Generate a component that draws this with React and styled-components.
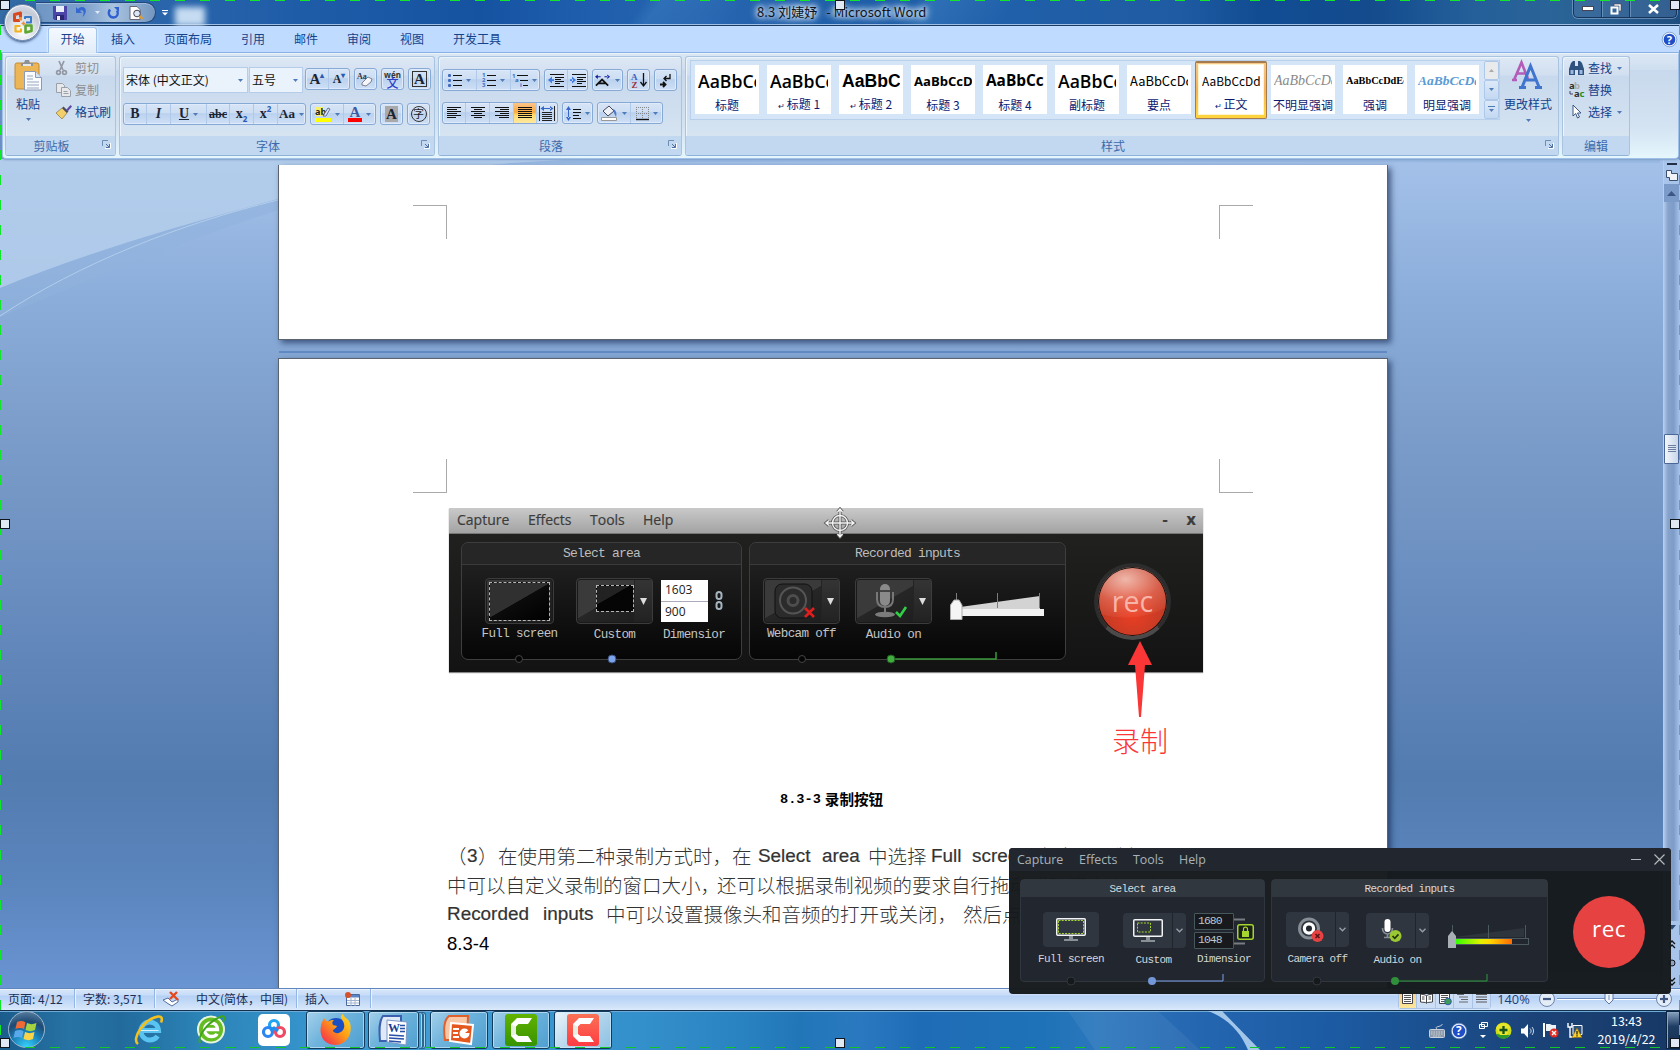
import React from "react";
import styled, { createGlobalStyle, css } from "styled-components";

const Global = createGlobalStyle`
  * { box-sizing: border-box; }
  html, body { margin: 0; padding: 0; overflow: hidden; }
  body { font-family: "Noto Sans CJK SC", "Noto Sans", sans-serif; font-size: 12px; color: #15428b; }
  svg { display: block; flex: none; overflow: visible; }
`;

const SERIF = `"Liberation Serif", "Noto Sans CJK SC", serif`;
const HUMAN = `"Open Sans", "Noto Sans", "Noto Sans CJK SC", sans-serif`;
const MONO = `"Liberation Mono", monospace`;

/* ---------- screen ---------- */
const Screen = styled.div`
  position: relative; width: 1680px; height: 1050px; overflow: hidden;
  display: flex; flex-direction: column; background: #6b8fc2;
`;

/* ---------- title bar ---------- */
const TitleBar = styled.header`
  height: 26px; flex: none; display: flex; position: relative;
  border-bottom: 1px solid #1b3a62; box-shadow: inset 0 -1px 0 #9fc0e6;
  background:
    linear-gradient(125deg, transparent 38%, rgba(80,150,210,.25) 39%, transparent 44%, transparent 54%, rgba(90,160,220,.25) 55%, transparent 60%),
    linear-gradient(90deg, #336ba5 0, #2b66ab 150px, #1f5ca8 300px, #1553a1 480px, #1d5cab 560px, #2765b0 700px, #1e5da8 860px, #2060aa 1000px, #1f5ba2 1180px, #114c93 1260px, #134b8d 1370px, #245f9a 1470px, #2a6497 1560px, #1f4d7f 1680px);
`;
const QuickAccess = styled.div`
  margin: 2px 0 0 36px; width: 120px; height: 21px; padding-left: 16px;
  border: 1px solid #25487a; border-left: 0; border-radius: 0 11px 11px 0;
  background: linear-gradient(90deg, #6f96c4, #7ea0cc 40%, #a9c3df 65%, #7396bf);
  box-shadow: inset 0 1px 0 #9dbce0; display: flex; align-items: center;
`;
const QuickSlot = styled.span`width: ${(p) => p.$w}px; display: flex; justify-content: center;`;
const QuickMore = styled.span`width: 20px; padding: 10px 0 0 6px;`;
const Ghost = styled.span`width: 30px; height: 19px; margin: 7px 0 0 -1px; background: #cfe3f6; filter: blur(3px); opacity: .95;`;
const TitleText = styled.div`
  margin-left: 552px; height: 24px; font: 13px/24px "Noto Sans CJK SC", sans-serif; letter-spacing: .06px; color: #0c1524; white-space: pre;
  text-shadow: 0 0 4px #dbe8f6, 0 0 6px #dbe8f6, 0 0 8px #c6daf0, 0 0 10px #cfe0f3;
`;
const WindowControls = styled.div`
  margin-left: auto; margin-right: 3px; width: 104px; height: 18px; display: flex; border: 1px solid #17355c; border-top: 0;
  border-radius: 0 0 5px 5px; box-shadow: 0 0 0 1px rgba(170,200,230,.45); background: rgba(90,130,175,.35);
`;
const WinBtn = styled.span`
  width: ${(p) => p.$w}px; display: flex; align-items: center; justify-content: center;
  & + & { border-left: 1px solid #1b3a62; box-shadow: inset 1px 0 0 rgba(170,200,230,.4); }
`;
const OfficeButton = styled.div`
  position: absolute; left: 4px; top: 4px; width: 37px; height: 37px; border-radius: 50%; z-index: 3;
  display: flex; align-items: center; justify-content: center; border: 1px solid #6b87ad;
  background: radial-gradient(circle at 50% 75%, #ffffff 0, #e6e8ee 30%, #c3cad7 60%, #e3e8f0 100%);
  box-shadow: inset 0 0 0 1px #f3f6fa, 0 1px 3px #24406a;
`;

/* ---------- tabs ---------- */
const TabStrip = styled.nav`
  height: 27px; flex: none; display: flex; align-items: flex-end; padding-left: 46px; background: #bfdbff;
  border-bottom: 1px solid #8db2e3; position: relative;
`;
const Tab = styled.span`
  height: 26px; padding: 0 14.5px; font-size: 12px; line-height: 25px; color: #15428b; white-space: nowrap;
  ${(p) => p.$active && css`
    margin: 0 -.5px -1px 2px; padding: 0 11.5px; height: 26px; line-height: 22px; border: 1px solid #a3c4ec; border-bottom: 0; border-radius: 3px 3px 0 0;
    background: linear-gradient(#f4f9ff, #e2ecf8); box-shadow: 0 0 3px #fff;
  `}
`;
const HelpMark = styled.span`margin: 0 3px 5px auto;`;

/* ---------- ribbon ---------- */
const Ribbon = styled.section`
  height: 106px; flex: none; margin: 0 1px 0 2px; padding: 2px 0 0 2px; display: flex; gap: 3px; position: relative; z-index: 1;
  border: 1px solid #9fc0e8; border-top-color: #eaf4fc; border-radius: 0 0 4px 4px; box-shadow: 0 1px 2px #7f9fc8;
  background: linear-gradient(#dbe6f4 0, #cfdff0 15%, #c9d9ed 16%, #d3e3f2 70%, #e5f6fd 100%);
`;
const Group = styled.div`
  width: ${(p) => p.$w}px; height: 100px; border: 1px solid #a9c4e0; border-bottom-color: #8fb2d8; border-radius: 3px; display: flex; flex-direction: column; flex: none;
  box-shadow: inset 1px 1px 0 #edf5fc; background: linear-gradient(#dde8f5 0, #d2dff0 18%, #c8d9ed 20%, #dae7f3 100%);
`;
const GroupBody = styled.div`flex: 1; display: flex; flex-direction: ${(p) => (p.$col ? "column" : "row")}; padding: ${(p) => p.$p || "0"};`;
const GroupLabel = styled.div`
  height: 19px; display: flex; align-items: center; justify-content: center; background: #c1d8f0; color: #3e6aaa; font-size: 12px; line-height: 19px; border-radius: 0 0 3px 3px; position: relative;
  padding-right: ${(p) => (p.$launcher ? 18 : 0)}px;
`;
const Launcher = styled.span`position: absolute; right: 4px; top: 4px;`;

const PasteButton = styled.div`width: 46px; display: flex; flex-direction: column; align-items: center; padding: 3px 2px 0 0;`;
const ButtonCaption = styled.span`font-size: 12px; line-height: 16px; color: #15428b; margin: ${(p) => p.$m || "0"}; white-space: nowrap;`;
const CommandList = styled.div`display: flex; flex-direction: column; margin-left: ${(p) => p.$ml || 0}px;`;
const Command = styled.div`
  height: 22px; display: flex; align-items: center; font-size: 12px; line-height: 22px; color: ${(p) => (p.$off ? "#8d8d8d" : "#15428b")}; white-space: nowrap;
`;
const CommandIcon = styled.span`width: 19px; display: flex; justify-content: flex-start;`;
const CommandDrop = styled.span`margin-left: 5px;`;

const ToolRow = styled.div`display: flex; gap: 4px; align-items: flex-start; height: ${(p) => p.$h}px;`;
const Combo = styled.div`
  width: ${(p) => p.$w}px; height: 26px; margin: -1px -3px 0 0; border: 1px solid #b5cde9; background: #eaf2fb; color: #111; font-size: 12px; line-height: 22px;
  padding: 0 4px 0 2px; display: flex; justify-content: space-between; align-items: center; white-space: nowrap;
`;
const ComboGap = styled.i`width: 0; margin-right: -3px;`;
const ButtonSet = styled.div`
  height: 22px; display: flex; border: 1px solid #86a9d6; border-radius: 3px; box-shadow: inset 0 0 0 1px #dfeafa;
  background: linear-gradient(#d7e4f6 0, #cddef3 45%, #bad1ee 48%, #cfe0f6 100%);
`;
const Tool = styled.span`
  width: ${(p) => p.$w}px; display: flex; align-items: center; justify-content: center; gap: 4px; color: #16243a; font: ${(p) => p.$font || "12px"} ; white-space: nowrap;
  & + & { border-left: 1px solid #b0c9e8; }
  ${(p) => p.$on && css`background: linear-gradient(#fbc58b, #fba93e 45%, #ffd96b 60%, #ffe9a0);`}
`;
const Glyph = styled.span`
  font-family: ${SERIF}; font-weight: 700; font-size: ${(p) => p.$s || 15}px; line-height: 16px; color: ${(p) => p.$c || "#1b2433"};
  font-style: ${(p) => (p.$i ? "italic" : "normal")}; text-decoration: ${(p) => p.$d || "none"};
  ${(p) => p.$bar && css`border-bottom: 4px solid ${p.$bar}; line-height: 12px; padding: 0 2px;`}
  ${(p) => p.$box && css`border: 1px solid #333; padding: 0 1px; line-height: 14px;`}
  ${(p) => p.$fill && css`background: #a9a9a9; padding: 0 1px;`}
  sub, sup { font-size: 8px; line-height: 0; color: #2a5ab4; font-family: "Noto Sans", sans-serif; }
`;
const Pinyin = styled.span`
  display: flex; flex-direction: column; align-items: center; color: #2d3ec9; font-size: 12px; line-height: 10px; font-weight: 500;
  small { font: 700 8px/7px "Noto Sans", sans-serif; color: #333; }
`;
const Ringed = styled.span`width: 16px; height: 16px; border: 1px solid #333; border-radius: 50%; font-size: 11px; line-height: 13px; text-align: center; color: #222;`;

/* ---------- styles gallery ---------- */
const Gallery = styled.div`display: flex; height: 60px; width: 810px; border: 1px solid #b9d0ed; background: #d4e5f8; flex: none;`;
const StyleCell = styled.div`
  width: 72px; height: 58px; padding: 4px; flex: none;
  ${(p) => p.$on && css`border: 1px solid #a37b4c; border-top-width: 2px; padding: 2px 3px; border-radius: 2px; background: linear-gradient(#f6c58a, #f5b35a 50%, #ffd23f 90%);`}
`;
const StyleCard = styled.div`
  width: 64px; height: 49px; background: #fff; display: flex; flex-direction: column; overflow: hidden;
  ${(p) => p.$on && css`box-shadow: 0 0 0 1px #fff4cc;`}
`;
const Sample = styled.span`
  width: 58px; height: 32px; margin-left: 3px; overflow: hidden; white-space: nowrap; font-family: ${(p) => p.$f}; font-size: ${(p) => p.$s}px; font-weight: ${(p) => p.$b || 400};
  font-style: ${(p) => (p.$i ? "italic" : "normal")}; color: ${(p) => p.$c || "#000"}; line-height: 32px;
`;
const StyleName = styled.span`font-size: 12px; line-height: 16px; color: #0c1a70; text-align: center; white-space: nowrap;
  small { font-size: 8px; }
`;
const GalleryScroll = styled.div`width: 15px; margin-left: 1px; display: flex; flex-direction: column;`;
const ScrollCell = styled.span`
  flex: 1; display: flex; align-items: center; justify-content: center; border: 1px solid #aec8ea; border-radius: 2px;
  background: ${(p) => (p.$off ? "#e9eaec" : "linear-gradient(#dde9f8,#c3d8f2)")};
`;
const ChangeStyles = styled.div`width: 56px; display: flex; flex-direction: column; align-items: center; padding-top: 1px;`;

/* ---------- document ---------- */
const Workspace = styled.main`
  flex: 1; position: relative; overflow: hidden; display: flex; flex-direction: column; padding: 6px 0 0 278px;
  background: linear-gradient(#a4c1e9 0, #8badda 141px, #7c9dca 271px, #6c90c1 406px, #6085b9 506px, #537cb0 616px, #5a85bd 726px, #6a95d3 830px);
`;
const Swoosh = styled.svg`position: absolute; left: 0; top: 0; pointer-events: none;`;
const Page = styled.article`
  position: relative; width: 1110px; flex: none; background: #fff; border: 1px solid #5b636e; box-shadow: 3px 3px 6px rgba(20,40,80,.65);
  height: ${(p) => p.$h}px; ${(p) => p.$cut && css`border-top: 0;`}
  padding: ${(p) => p.$p}; 
`;
const PageSeam = styled.div`width: 1108px; height: 2px; margin: 11px 0 5px 1px; background: #6189c4; flex: none; position: relative;`;
const CropRow = styled.div`width: 840px; height: 34px; display: flex; justify-content: space-between; margin-left: 134px;`;
const Crop = styled.i`
  width: 34px; height: 34px; border: 0 solid #aaa;
  ${(p) => (p.$v === "t" ? "border-top-width: 1px;" : "border-bottom-width: 1px;")}
  ${(p) => (p.$h === "r" ? "border-right-width: 1px;" : "border-left-width: 1px;")}
`;
const Caption = styled.p`
  margin: 28px 0 0 501px; display: flex; gap: 4px; height: 22px; font: 700 14.6px/22px "Noto Sans CJK SC", sans-serif; color: #000;
  span { font-family: ${MONO}; font-size: 13.6px; padding-top: 1px; }
`;
const Paragraph = styled.div`margin: 31px 0 0 168px; font-family: "Liberation Sans", "Noto Sans CJK SC", sans-serif; font-size: 19.5px; color: #333;`;
const Line = styled.p`margin: 0; height: 29px; line-height: 29px; display: flex; white-space: nowrap; font-weight: 300;`;
const Run = styled.span`
  width: ${(p) => p.$w}px; flex: none;
  ${(p) => (p.$latin ? css`font-size: 18.9px; font-weight: 400; -webkit-text-stroke: .2px #333;` : css`font-family: "Noto Sans CJK SC", sans-serif;`)}
  ${(p) => p.$dark && css`color: #000; padding-top: 1px; font-size: 18.5px; -webkit-text-stroke: 0;`}
`;
const NoteRow = styled.div`display: flex; flex-direction: column; align-items: center; width: 60px; margin-left: 831px; margin-top: -31px; height: 119px; position: relative; z-index: 1;`;
const Note = styled.span`font-size: 28px; line-height: 34px; color: #fb3636; font-weight: 300; margin-top: 5px; white-space: nowrap;`;

/* ---------- legacy recorder picture ---------- */
const Classic = styled.div`width: 754px; height: 164px; margin: 15px 0 0 170px; background: linear-gradient(#232321, #131313); display: flex; flex-direction: column; box-shadow: 0 1px 1px #888;`;
const ClassicMenu = styled.div`
  height: 26px; flex: none; display: flex; align-items: center; padding: 0 4px 3px 8px; background: linear-gradient(#c9c9c9, #a3a3a3); border-bottom: 1px solid #777; color: #3c3c3c;
  font: 14px/21px ${HUMAN}; -webkit-text-stroke: .2px #3c3c3c;
`;
const MenuWord = styled.span`width: ${(p) => p.$w}px;`;
const MenuSpring = styled.span`flex: 1;`;
const ClassicClose = styled.b`width: ${(p) => p.$w}px; font: 700 16px/21px ${HUMAN}; text-align: center;`;
const ClassicBody = styled.div`flex: 1; display: flex; padding: 8px 0 0 12px; gap: 7px;`;
const ClassicPanel = styled.div`
  width: ${(p) => p.$w}px; height: 118px; border: 1px solid #3e3e3e; border-radius: 7px; background: linear-gradient(#252525, #060606); display: flex; flex-direction: column; position: relative; flex: none;
`;
const ClassicHead = styled.div`height: 22px; flex: none; border-bottom: 1px solid #3a3a3a; background: #262626; border-radius: 7px 7px 0 0; color: #bdbdbd; text-align: center; font: 13px/21px ${MONO}; letter-spacing: -.8px;`;
const PanelRow = styled.div`flex: 1; display: flex; padding-top: ${(p) => p.$pt}px;`;
const Column = styled.div`width: ${(p) => p.$w}px; display: flex; flex-direction: column; align-items: center; margin-left: ${(p) => p.$ml || 0}px; margin-top: ${(p) => p.$mt || 0}px; flex: none;`;
const ClassicTile = styled.div`
  width: ${(p) => p.$w}px; height: 46px; flex: none; border: 1px solid #3c3c3c; border-radius: 4px; background: linear-gradient(150deg, #3a3a3a 45%, #262626 46%, #1c1c1c); display: flex; align-items: center; justify-content: center;
  box-shadow: inset 0 0 0 1px #1a1a1a;
`;
const FullArea = styled.span`width: 61px; height: 39px; border: 1.5px dashed #b5b5b5; background: linear-gradient(150deg, #303030 48%, #0b0b0b 49%, #000);`;
const CustomArea = styled.span`width: 38px; height: 27px; border: 1.5px dashed #b5b5b5; margin: -6px 0 0 19px; background: linear-gradient(150deg, #222 40%, #050505 41%);`;
const IconNudge = styled.span`margin-left: ${(p) => p.$x}px;`;
const ClassicSplit = styled.span`width: 18px; margin-left: auto; height: 42px; border-left: 1px solid #242424; background: linear-gradient(#343434, #222); display: flex; align-items: center; justify-content: center;`;
const ClassicLabel = styled.span`font: 12.6px/14px ${MONO}; letter-spacing: -.65px; color: #c4c4c4; margin: ${(p) => p.$mt || 3}px 0 0 ${(p) => p.$x || 0}px; white-space: nowrap;`;
const ClassicFields = styled.div`width: 47px; height: 42px; background: #fff; margin-top: 2px; display: flex; flex-direction: column;`;
const ClassicField = styled.span`flex: 1; color: #222; font: 12px/20px ${HUMAN}; padding-left: 4px; & + & { border-top: 1px solid #aab; }`;
const FieldsRow = styled.div`display: flex; gap: 7px; align-items: center;`;
const Rail = styled.svg`position: absolute; left: -1px; bottom: -7px;`;
const ClassicRec = styled.div`
  width: 77px; height: 77px; margin: 21px 0 0 21px; border-radius: 50%; border: 4px solid #2d2d2d; border-bottom-color: #4a4a4a; flex: none; box-shadow: inset 0 0 0 1px #111;
  background: radial-gradient(ellipse 85% 55% at 40% 18%, rgba(255,225,215,.75) 0, rgba(240,130,110,.5) 60%, rgba(240,120,95,.15) 100%, transparent 101%), radial-gradient(circle at 50% 65%, #ee3e24, #b33a25 75%);
  color: #f6b5a8; font: 28.500px/68px ${HUMAN}; text-align: center;
`;

/* ---------- scrollbar ---------- */
const ScrollBar = styled.aside`
  position: absolute; right: 0; top: 0; width: 17px; height: 830px; background: linear-gradient(90deg, #b0c8ea, #86a3cc 25%, #7e9cc8 60%, #a8c4ee); border-left: 1px solid #b6cdee;
  display: flex; flex-direction: column; align-items: center; padding-right: 1px;
`;
const ScrollTop = styled.span`padding-top: 4px; height: 25px; width: 15px; background: #a9c4ea; display: flex; flex-direction: column; align-items: center; gap: 5px;`;
const ScrollUp = styled.span`width: 15px; height: 18px; background: #7d9bc8; display: flex; align-items: center; justify-content: center;`;
const ScrollThumb = styled.span`
  width: 15px; height: 30px; margin-top: 232px; border: 1px solid #4b6797; background: linear-gradient(90deg, #f2f6fb, #c8d6ea); display: flex; align-items: center; justify-content: center; border-radius: 1px;
`;
const ScrollNav = styled.span`margin-top: auto; width: 15px; height: 68px; background: #a9c4ea; display: flex; flex-direction: column; align-items: center; gap: 10px; padding-top: 4px;`;

/* ---------- status bar ---------- */
const StatusBar = styled.footer`
  height: 22px; flex: none; display: flex; align-items: center; border-top: 1px solid #5f87bd; box-shadow: inset 0 1px 0 #e8f1fc; padding-bottom: 2px;
  background: linear-gradient(#d7e6f9 0, #c7dcf8 30%, #b3d0f5 32%, #d0e2f8 85%, #dcebfc); color: #15428b; font-size: 12px;
`;
const StatusCell = styled.span`
  height: 19px; width: ${(p) => p.$w}px; padding-left: ${(p) => p.$pl || 8}px; line-height: 18px; display: flex; align-items: center; gap: 16px; white-space: nowrap; flex: none; font-size: 12px;
  border-right: 1px solid #94b6e2; box-shadow: 1px 0 0 #eaf3fe; color: #1b2f57;
`;
const ViewButtons = styled.div`margin-left: auto; width: 93px; height: 20px; display: flex; border: 1px solid #a8c3e6; border-radius: 3px;`;
const ViewBtn = styled.span`flex: 1; display: flex; align-items: center; justify-content: center; & + & { border-left: 1px solid #a8c3e6; }
  background: ${(p) => (p.$on ? "linear-gradient(#fbc98c,#fde79a)" : "#cbdef6")};`;
const ZoomText = styled.span`width: 48px; text-align: center; font: 12.8px/18px ${HUMAN}; color: #1e3d7a; padding-right: 3px;`;
const ZoomSlider = styled.div`width: 141px;`;

/* ---------- taskbar ---------- */
const TaskBar = styled.footer`
  height: 40px; flex: none; display: flex; align-items: stretch; position: relative; border-top: 1px solid #14304f; box-shadow: inset 0 1px 0 #6fa9d6; padding-bottom: 1px;
  background:
    linear-gradient(90deg, #1b5c8c 0, #2673a4 70px, #226a9c 120px, #2b83b6 200px, #3592ca 300px, #3f9dd4 430px, #3490cb 640px, #2a83c1 740px, #2176b8 800px, #2a79c0 860px, #1f6cb6 920px, #1e72b7 1040px, #2c77bd 1100px, #2566b0 1200px, #1c5ca5 1320px, #1b4f8d 1440px, #1b4277 1540px, #173865 1680px);
`;
const Streak = styled.svg`position: absolute; left: 0; top: 0; pointer-events: none;`;
const Orb = styled.span`
  width: 37px; height: 37px; margin: 0 0 0 8px; border-radius: 50%; flex: none; display: flex; align-items: center; justify-content: center; z-index: 1;
  background: radial-gradient(circle at 50% 100%, #35d3ff 0, #1a7db5 40%, #1d4a73 65%, #6c8fae 100%); border: 1px solid #9db7cd;
`;
const PinnedRow = styled.div`display: flex; align-items: center; z-index: 1; margin-left: ${(p) => p.$ml}px; gap: ${(p) => p.$gap}px;`;
const AppTile = styled.span`width: 32px; height: 32px; border-radius: ${(p) => p.$r || 5}px; background: ${(p) => p.$bg}; display: flex; align-items: center; justify-content: center;`;
const TaskButton = styled.span`
  width: ${(p) => p.$w}px; height: 38px; margin-left: ${(p) => p.$ml || 0}px; border: 1px solid #143a5c; border-radius: 3px; box-shadow: inset 0 0 0 1px rgba(210,235,250,.65); display: flex; align-items: center; justify-content: center;
  background: ${(p) => (p.$on ? "linear-gradient(135deg,#ecf5fb 0,#b9d9ee 45%,#8cc0e2)" : "linear-gradient(135deg,#a5d0ea 0,#6db3dc 45%,#4f9fd0)")};
`;
const Stacked = styled.span`width: 7px; height: 37px; margin-left: -4px; border: 1px solid #2c6590; border-left: 0; box-shadow: inset -1px 0 0 #a8d4ee, inset -3px 0 0 #2c6590, inset -4px 0 0 #a8d4ee; border-radius: 0 3px 3px 0;`;
const Tray = styled.div`margin-left: auto; display: flex; align-items: center; z-index: 1;`;
const TraySlot = styled.span`width: ${(p) => p.$w}px; display: flex; justify-content: flex-start; padding-top: 1px;`;
const Clock = styled.div`width: 76px; height: 36px; display: flex; flex-direction: column; align-items: center; justify-content: center; color: #fff; font: 12.4px/18px "Noto Sans CJK SC", sans-serif; padding-right: 3px;`;
const Peek = styled.span`width: 14px; height: 38px; border: 1px solid #0d2440; box-shadow: inset 1px 1px 0 #8ca7c4; background: linear-gradient(#87a1bf, #1f3d63 40%, #142e52);`;

/* ---------- recorder window ---------- */
const Recorder = styled.section`
  position: absolute; left: 1009px; top: 848px; width: 662px; height: 146px; border-radius: 4px; z-index: 5; overflow: hidden; display: flex; flex-direction: column;
  background: rgba(22,26,29,.975);
`;
const RecMenu = styled.div`height: 23px; flex: none; display: flex; align-items: center; padding: 0 6px 1px 8px; background: #22272f; color: #a9b2b8; font: 12.4px/21px ${HUMAN};`;
const RecBody = styled.div`flex: 1; display: flex; gap: 6px; padding: 8px 0 0 11px;`;
const RecPanel = styled.div`width: ${(p) => p.$w}px; height: 103px; background: #22262e; border: 1px solid #30363e; border-radius: 4px; display: flex; flex-direction: column; position: relative; flex: none;`;
const RecHead = styled.div`height: 17px; flex: none; background: #30373f; color: #d7dadc; text-align: center; font: 11px/18px ${MONO}; letter-spacing: -.6px;`;
const RecTile = styled.div`width: ${(p) => p.$w}px; height: 35px; flex: none; background: #30363f; border-radius: 4px; display: flex; align-items: center; justify-content: center;`;
const RecTileMain = styled.span`flex: 1; display: flex; justify-content: center;`;
const RecSplit = styled.span`width: 14px; height: 35px; border-left: 1px solid #20242b; display: flex; align-items: center; justify-content: center;`;
const RecLabel = styled.span`font: 11px/12px ${MONO}; letter-spacing: -.6px; color: #d3d6d8; margin: 6px ${(p) => p.$pull || 0}px 0 0; white-space: nowrap;`;
const RecFields = styled.div`display: flex; align-self: flex-start; height: 37px; margin: 1px 0 -3px 6px;`;
const FieldStack = styled.div`display: flex; flex-direction: column; gap: 2px;`;
const RecField = styled.span`width: 40px; height: 17px; border: 1px solid #46585c; border-radius: 1px; background: #17191c; color: #bfc6c9; font: 11.4px/15px ${MONO}; letter-spacing: -.9px; padding-left: 3px;`;
const RecDisc = styled.div`width: 72px; height: 72px; border-radius: 50%; background: #e64242; color: #fff; margin: 17px 0 0 19px; font: 22.500px/66px ${HUMAN}; text-align: center; flex: none; letter-spacing: .4px;`;

/* ---------- capture frame ---------- */
const Frame = styled.div`
  position: absolute; inset: 0; height: 1048px; z-index: 8; pointer-events: none;
  background:
    repeating-linear-gradient(90deg, #12e62a 0 10px, transparent 10px 25px) 0 0 / 100% 1px no-repeat,
    repeating-linear-gradient(90deg, #12c62a 0 10px, transparent 10px 25px) 0 100% / 100% 1px no-repeat,
    repeating-linear-gradient(180deg, #12e62a 0 10px, transparent 10px 25px) 0 0 / 1px 100% no-repeat,
    repeating-linear-gradient(180deg, #12e62a 0 10px, transparent 10px 25px) 100% 0 / 1px 100% no-repeat;
`;
const Handle = styled.i`position: absolute; left: ${(p) => p.$x}px; top: ${(p) => p.$y}px; width: 10px; height: 10px; border: 1px solid #10151c; background: #dfe8f3;`;
const MoveCursor = styled.svg`position: absolute; left: 825px; top: 508px;`;

/* ---------- drawings ---------- */
const Drop = ({ c = "#4f7cb8", w = 5 }) => <svg width={w} height={w * 0.6} viewBox="0 0 5 3"><path d="M0 0h5L2.5 3z" fill={c} /></svg>;
const BigDrop = () => <svg width="7" height="7" viewBox="0 0 7 7"><path d="M0 0h7L3.500 7z" fill="#ddd" /></svg>;
const LauncherIcon = () => (
  <svg width="9" height="9" viewBox="0 0 9 9" fill="none"><path d="M.5 6V.5H6" stroke="#6e8db5" /><path d="M4 4l3 3M7.5 4v3.500H4" stroke="#4d709f" /><path d="M8.500 3v5.500H3" stroke="#fff" /></svg>
);
const OfficeLogo = () => (
  <svg width="24" height="24" viewBox="0 0 24 24" fill="none" strokeLinejoin="round">
    <path d="M9 9.500H3.500V3.500L9.500 2v4" stroke="#d8471d" strokeWidth="3" /><path d="M9.500 6v3.500" stroke="#f08a2c" strokeWidth="3" />
    <path d="M14 8V6h6v5.500h-5" stroke="#3a7bc8" strokeWidth="2" />
    <path d="M9.500 15H4.500v5.500h5.500v-3" stroke="#f2b21b" strokeWidth="2.200" />
    <path d="M14.500 14.500h6v5.500l-6 1.500z" stroke="#5ea631" strokeWidth="2.600" />
    <path d="M10.500 12.500h4M12.500 10.500v4" stroke="#ef8d3c" strokeWidth="1.500" />
  </svg>
);
const SaveIcon = () => (
  <svg width="14" height="14" viewBox="0 0 14 14"><path d="M0 0h14v14H1.500L0 12.500z" fill="#4d44a8" /><path d="M3 0h8v6H3z" fill="#e9edf8" /><path d="M3 9h8v5H3z" fill="#2b2670" /><path d="M4 10h3v4H4z" fill="#eef" /></svg>
);
const UndoIcon = () => <svg width="13" height="13" viewBox="0 0 13 13"><path d="M1 1v6h6L4.800 4.800C8 3 10 6 7.500 11c5-4 4-10-.5-10C5 1 3.500 2.500 3 3z" fill="#3568d0" /></svg>;
const RedoIcon = () => <svg width="13" height="13" viewBox="0 0 13 13" fill="none"><path d="M3 3.500C0 8 3 11.500 6.500 11.500S12 8 10 4.500" stroke="#2e5ed0" strokeWidth="2.300" /><path d="M7 1h5v5z" fill="#2e5ed0" /></svg>;
const PreviewIcon = () => (
  <svg width="15" height="14" viewBox="0 0 15 14"><path d="M1 .5h7l3 3v10H1z" fill="#fff" stroke="#667" /><circle cx="8" cy="7.500" r="3.300" fill="#dbe7f5" stroke="#445" /><path d="M10.500 10l3 3" stroke="#e69a2b" strokeWidth="2.400" /></svg>
);
const PasteIcon = () => (
  <svg width="27" height="31" viewBox="0 0 27 31"><rect x="0" y="3" width="24" height="26" rx="2" fill="#ecb657" stroke="#c48a34" /><path d="M6 6V3h3l1-3h4l1 3h3v3z" fill="#8d9198" /><path d="M8 5h8" stroke="#e8e8ea" strokeWidth="2" /><path d="M9.500 11.500h11l6 6v12.500h-17z" fill="#fbfcff" stroke="#8a9bb8" /><path d="M20.500 11.500v6h6" fill="#d8e2f0" stroke="#8a9bb8" /><path d="M12 16h6M12 19h6M12 22h12M12 25h12M12 28h12" stroke="#97a4bd" /></svg>
);
const CutIcon = () => <svg width="11" height="15" viewBox="0 0 11 15" fill="none" stroke="#9299a5" strokeWidth="1.700"><path d="M3 0l4 9M8 0L4 9" /><circle cx="2.500" cy="11.500" r="1.900" /><circle cx="8.500" cy="11.500" r="1.900" /></svg>;
const CopyIcon = () => <svg width="15" height="14" viewBox="0 0 15 14" fill="#e6e8ec" stroke="#9aa0aa"><path d="M.5.5h6l2 2v7h-8z" /><path d="M5.500 4.500h6l3 3v6h-9z" /><path d="M7.500 8.500h4M7.500 10.500h5" /></svg>;
const BrushIcon = () => <svg width="16" height="14" viewBox="0 0 16 14"><path d="M0 8l6-5 5 5-5 6C4 12 2 10 0 8z" fill="#f2cf6b" stroke="#8d7638" strokeWidth=".7" /><path d="M6 3l5 5 1.500-1.500-5-5z" fill="#4c4c60" /><path d="M10 5l4.500-5L16 1.500 12 6z" fill="#5b49a5" /></svg>;
const EraserIcon = () => <svg width="17" height="15" viewBox="0 0 17 15"><text x="0" y="7" fontSize="8" fontWeight="700" fill="#334" fontFamily="Liberation Serif">Aa</text><path d="M5 11l6-6 4 2-1 3-5 4-4-1z" fill="#f4f6fa" stroke="#667" strokeWidth=".8" /></svg>;
const MarkerIcon = () => <svg width="16" height="16" viewBox="0 0 16 16"><path d="M0 1h9v9H0z" fill="#f7f06a" /><text x="0" y="8.500" fontSize="9" fontWeight="700" fill="#223" fontFamily="Noto Sans">ab</text><path d="M8 10l5-8 2 1-4 7z" fill="#dde5f2" stroke="#445a88" strokeWidth=".8" /><path d="M0 12h16v4H0z" fill="#ff0" /></svg>;
const ListIcon = ({ kind }) => (
  <svg width="14" height="13" viewBox="0 0 14 13">
    {kind === "bullet" && [1, 6, 11].map((y) => <rect key={y} x="0" y={y - 1} width="3" height="3" rx="1" fill="#3f6bc2" />)}
    {kind === "number" && [1, 6, 11].map((y, i) => <text key={y} x="0" y={y + 2} fontSize="6" fontWeight="700" fill="#3f6bc2" fontFamily="Noto Sans">{i + 1}</text>)}
    {kind === "multi" ? (
      <><text x="-2" y="4" fontSize="6" fontWeight="700" fill="#3f6bc2" fontFamily="Noto Sans">1</text><text x="1" y="8" fontSize="6" fontWeight="700" fill="#3f6bc2" fontFamily="Noto Sans">a</text><text x="6" y="13" fontSize="6" fontWeight="700" fill="#3f6bc2" fontFamily="Noto Sans">i</text><path d="M3 1.500h11M6 6.500h8M9 11.500h5" stroke="#111" /></>
    ) : <path d="M5 1.500h9M5 6.500h9M5 11.500h9" stroke="#111" />}
  </svg>
);
const IndentIcon = ({ out }) => <svg width="16" height="13" viewBox="0 0 16 13"><path d="M2 .5h14M7 3.500h9M7 5.500h6M7 7.500h9M7 9.500h5M2 12.500h14" stroke="#111" strokeWidth="1.200" /><path d={out ? "M0 6l4-3.500v7zM3 5.200h3v1.800H3z" : "M6 6L2 2.500v7zM0 5.200h3v1.800H0z"} fill="#3f7be0" /></svg>;
const WidthIcon = () => <svg width="16" height="13" viewBox="0 0 17 13"><path d="M1 12L7.500 5.500 14 12M4 9.500h7" stroke="#111" strokeWidth="1.800" fill="none" /><path d="M0 2.500L3 0v5zM16 2.500L13 0v5zM2 2h4v1H2zM10 2h4v1h-4z" fill="#15209b" /></svg>;
const SortIcon = () => <svg width="16" height="16" viewBox="0 0 16 16"><text x="0" y="7.500" fontSize="9" fontWeight="700" fill="#3a5fbe" fontFamily="Liberation Serif">A</text><text x="0.500" y="16" fontSize="9" fontWeight="700" fill="#9b3140" fontFamily="Liberation Serif">Z</text><path d="M12.500 1v12M9.500 10l3 4 3-4" stroke="#111" strokeWidth="1.300" fill="none" /></svg>;
const MarksIcon = () => <svg width="11" height="13" viewBox="0 0 11 13" stroke="#111" fill="none" strokeWidth="1.300"><path d="M10 0v4.500H4M6.500 2L4 4.500 6.500 7" /><path d="M0 10.500h5M3 8l2.500 2.500L3 13" strokeWidth="1.800" /></svg>;
const ALIGN_ROWS = {
  l: [[0, 14], [0, 10], [0, 14], [0, 10], [0, 14], [0, 9]],
  c: [[0, 14], [3, 11], [0, 14], [3, 11], [0, 14], [3, 11]],
  r: [[0, 14], [5, 14], [0, 14], [5, 14], [0, 14], [4, 14]],
  j: [[0, 14], [0, 14], [0, 14], [0, 14], [0, 14], [0, 14]],
};
const AlignIcon = ({ kind }) => (
  <svg width="14" height="12" viewBox="0 0 14 12"><path d={ALIGN_ROWS[kind].map(([a, b], i) => `M${a} ${i * 2 + 0.5}H${b}`).join("")} stroke="#111" strokeWidth="1.100" /></svg>
);
const SpreadIcon = () => <svg width="16" height="15" viewBox="0 0 16 15"><path d="M.5 0v15M15.500 0v15M3 6.500h10M3 8.500h10M3 10.500h10M3 12.500h10M3 14.500h10" stroke="#222" /><path d="M1.500 2.500L5 0v5zM14.500 2.500L11 0v5zM4 2h8v1H4z" fill="#3566cb" /></svg>;
const SpacingIcon = () => <svg width="15" height="15" viewBox="0 0 15 15"><path d="M2.500 0L5 4H0zM2.500 15L5 11H0zM2 3h1v9H2z" fill="#3566cb" /><path d="M7 3.500h8M7 6.500h8M7 9.500h6M7 12.500h8" stroke="#111" /></svg>;
const BucketIcon = () => <svg width="17" height="16" viewBox="0 0 17 16"><path d="M2 6l6-5 5 5-6 5z" fill="#eef2f8" stroke="#445" /><path d="M12 4c3 1 4 4 3 8l-2-4z" fill="#4d7ccf" /><path d="M.5 12.500h15v3H.5z" fill="#fff" stroke="#999" /></svg>;
const BorderIcon = () => <svg width="13" height="13" viewBox="0 0 13 13"><path d="M.5 0v11M6.500 0v11M12.500 0v11M0 .5h13M0 6.500h13" stroke="#888" strokeDasharray="1 1" /><path d="M0 12.500h13" stroke="#111" strokeWidth="1.400" /></svg>;
const StylesIcon = () => (
  <svg width="30" height="28" viewBox="0 0 30 28" fill="none"><path d="M1 19L8.500 1.500 15 18M4 12.500h8M-1 19h5" stroke="#b35cb8" strokeWidth="2.600" /><path d="M9 26.500L17.500 5l8.500 21M11.500 19h12M6 26.500h7M22 26.500h7" stroke="#3f74cf" strokeWidth="3" /></svg>
);
const FindIcon = () => <svg width="15" height="14" viewBox="0 0 15 14" fill="#31517f"><path d="M2 2l2-2h2v14H0V8zM13 2l-2-2H9v14h6V8z" /><path d="M6 5h3v4H6z" /><path d="M1.500 9h3v4h-3zM10.500 9h3v4h-3z" fill="#9cb8e0" /></svg>;
const ReplaceIcon = () => <svg width="16" height="16" viewBox="0 0 16 16" fontFamily="Noto Sans" fontWeight="700" fontSize="9.500"><text x="0" y="7" fill="#333">a</text><text x="5" y="7" fill="#aaa">b</text><text x="5" y="15" fill="#333">a</text><text x="10.500" y="15" fill="#1f8f1f">c</text><path d="M1 9v3h3" stroke="#446" fill="none" /></svg>;
const PointerIcon = () => <svg width="14" height="14" viewBox="-3 0 14 14"><path d="M1 0v11l2.700-2.500L5.500 13l2-1-2-4H9z" fill="#fff" stroke="#3c5680" /></svg>;
const MonitorIcon = ({ full }) => (
  <svg width="30" height="23" viewBox="0 0 30 23" fill="none"><rect x=".75" y=".75" width="28.500" height="16.500" rx="1" stroke="#f3f4f5" strokeWidth="1.500" /><rect x={full ? 2.500 : 4.500} y={full ? 2.500 : 4} width={full ? 25 : 13} height={full ? 13 : 9} stroke="#a4d62e" strokeDasharray="2 1.200" /><path d="M13 18h4v3h-4z" fill="#888f95" /><path d="M8 22h14" stroke="#888f95" strokeWidth="2" /></svg>
);
const Chevron = () => <svg width="7" height="5" viewBox="0 0 7 5"><path d="M.5.800l3 3 3-3" stroke="#99a0a6" strokeWidth="1.300" fill="none" /></svg>;
const LinkLock = () => (
  <svg width="20" height="37" viewBox="0 0 20 37" fill="none"><path d="M0 6.500h11M0 30.500h11" stroke="#777d82" strokeWidth="2" /><rect x="3.750" y="11.750" width="15.500" height="14.500" rx="2" stroke="#a4d62e" strokeWidth="1.500" fill="#1b2018" /><path d="M8 18h7v6H8z" fill="#a4d62e" /><path d="M9.500 18v-1.800a2 2 0 014 0V18" stroke="#a4d62e" strokeWidth="1.200" /></svg>
);
const CameraIcon = () => (
  <svg width="26" height="25" viewBox="0 0 26 25"><circle cx="11" cy="11.500" r="9.500" fill="#30363f" stroke="#868d95" strokeWidth="3" /><circle cx="11" cy="11.500" r="4.600" fill="#22262e" stroke="#fff" strokeWidth="3.200" /><circle cx="19.500" cy="19" r="6" fill="#e64242" /><path d="M17.500 17l4 4M21.500 17l-4 4" stroke="#5d1216" strokeWidth="1.500" /></svg>
);
const MicIcon = () => (
  <svg width="24" height="23" viewBox="0 0 24 23"><rect x="5.500" y="0" width="6" height="13" rx="3" fill="#fff" /><path d="M3.500 9c0 8 10 8 10 0M8.500 15v3M5 18.500h7" stroke="#868d95" strokeWidth="1.700" fill="none" /><circle cx="16.500" cy="17" r="6" fill="#9ac832" /><path d="M13.500 17l2.300 2.300 3.700-4" stroke="#26330c" strokeWidth="1.700" fill="none" /></svg>
);
const LevelMeter = () => (
  <svg width="84" height="26" viewBox="0 0 84 26">
    <defs><linearGradient id="level"><stop offset="0" stopColor="#3f0" /><stop offset=".45" stopColor="#e6f000" /><stop offset=".6" stopColor="#ffd800" /><stop offset="1" stopColor="#ff6a00" /></linearGradient></defs>
    <path d="M6 12L76 3v9z" fill="#2f353c" /><path d="M4.500 0v8M40.500 0v13M77.500 0v13" stroke="#4c5a5e" /><rect x="8.500" y="13.500" width="72" height="6" fill="#22262e" stroke="#4c5a5e" /><rect x="8" y="14" width="56" height="5" fill="url(#level)" /><path d="M0 23V11l4-5 4 5v12z" fill="#a8b0b6" />
  </svg>
);
const ClassicVolume = () => (
  <svg width="95" height="28" viewBox="0 0 95 28"><path d="M10 14L90 3v13H10z" fill="#d3d3d3" /><path d="M6.500 0v8M47.500 0v15M89.500 0v15" stroke="#7d7d7d" /><path d="M8 16h86v7H8z" fill="#f2f2f2" /><path d="M.5 26.500V12L4 7h5l3 5v14.500z" fill="#f5f5f5" stroke="#aaa" /></svg>
);
const WebcamIcon = () => (
  <svg width="46" height="38" viewBox="0 0 46 38" fill="none"><rect x="4" y="2" width="37" height="34" rx="7" fill="#2b2b2b" stroke="#111" /><circle cx="22" cy="18.500" r="13" stroke="#555" strokeWidth="2" /><circle cx="22" cy="18.500" r="5" stroke="#4d4d4d" strokeWidth="3" /><path d="M34 26l9 9M43 26l-9 9" stroke="#e01e1e" strokeWidth="2.600" /></svg>
);
const StudioMic = () => (
  <svg width="40" height="36" viewBox="0 0 40 36" fill="none"><rect x="13" y="1" width="10" height="22" rx="5" fill="#8a8a8a" /><path d="M13 8h10" stroke="#444" strokeWidth="2" /><path d="M10 9v7c0 5 3 8 8 8s8-3 8-8V9M18 24v6" stroke="#777" strokeWidth="2" /><ellipse cx="18" cy="31.500" rx="10" ry="2.800" fill="#7c7c7c" /><path d="M29 29l4 4 6-9" stroke="#31cf46" strokeWidth="2.600" /></svg>
);
const ChainIcon = () => <svg width="8" height="19" viewBox="0 0 8 19" fill="none" stroke="#a4b5bf" strokeWidth="2"><rect x="1.500" y="1" width="5" height="7" rx="2.500" /><rect x="1.500" y="11" width="5" height="7" rx="2.500" /></svg>;
const ArrowUp = () => <svg width="24" height="77" viewBox="0 0 24 77"><path d="M12 0l12 24h-7l-4 52h-2L7 24H0z" fill="#fb3636" /></svg>;
const Globe = ({ s = 15 }) => <svg width={s} height={s} viewBox="0 0 15 15"><circle cx="7.500" cy="7.500" r="6.500" fill="#1f4fc8" stroke="#eef4fc" strokeWidth="1.300" /><circle cx="7.500" cy="7.500" r="7.300" fill="none" stroke="#5f7fb0" strokeWidth=".6" /><text x="4.700" y="11.500" fontSize="11" fontWeight="700" fill="#fff" fontFamily="Noto Sans">?</text></svg>;
const WindowsLogo = () => (
  <svg width="25" height="24" viewBox="0 0 25 24"><path d="M3 4c3-1.500 6-1.500 8.500.3L10 11C7.500 9.500 4.500 9.500 1.500 11z" fill="#ef6a35" /><path d="M13 5c3 1.500 6 1.500 9.500 0L21 12c-3 1.500-6 1.500-9.500 0z" fill="#a4d241" /><path d="M1 13c3-1.500 6-1.500 8.500.3L8 20c-2.500-1.500-5.500-1.500-8.500 0z" fill="#59a8ea" /><path d="M11 14c3 1.500 6 1.500 9.500 0L19 21c-3 1.500-6 1.500-9.500 0z" fill="#fbd349" /></svg>
);
const IeIcon = () => (
  <svg width="30" height="31" viewBox="0 0 30 31" fill="none"><path d="M7 15.500h17.500C24 10 20 7 15.500 7S7 11 7 16s4 9 8.500 9c3.500 0 6.500-1.500 8-4" stroke="#59c3f1" strokeWidth="5" /><path d="M7 15.500h17.500" stroke="#d6f2ff" strokeWidth="1" /><path d="M4 29C-3 24 10 4 24 1.500c5-.5 4 4 3 6" stroke="#f3c01d" strokeWidth="2.600" /></svg>
);
const GreenE = () => (
  <svg width="30" height="30" viewBox="0 0 30 30" fill="none"><circle cx="15" cy="14.500" r="13" fill="#64bb22" stroke="#e7f5dc" strokeWidth="2" /><path d="M8.500 14.500h13c0-4-2.700-6.500-6.200-6.500s-6.800 2.500-6.800 6.500 3.200 7 6.800 7c2.500 0 4.800-1 5.700-2.800" stroke="#fff" strokeWidth="3.400" /><path d="M4 28C1 21 13 5 27 1c2 1 1 4 0 6" stroke="#3fa51d" strokeWidth="2" /></svg>
);
const CloudDisk = () => (
  <svg width="26" height="24" viewBox="0 0 26 24" fill="none" strokeWidth="3.200"><circle cx="13" cy="7" r="4.500" stroke="#21a5f3" /><circle cx="7" cy="14" r="4.500" stroke="#2c86f2" /><circle cx="19" cy="14" r="4.500" stroke="#ef4a63" /><path d="M9 12l4-2 4 3" stroke="#1e8ff0" /></svg>
);
const Firefox = () => (
  <svg width="32" height="32" viewBox="0 0 32 32">
    <defs><linearGradient id="fox" x1="1" y1="0" x2="0" y2="1"><stop offset="0" stopColor="#ffe226" /><stop offset=".45" stopColor="#ff9b15" /><stop offset="1" stopColor="#f21b5b" /></linearGradient></defs>
    <circle cx="16" cy="15" r="11" fill="#1b4fc4" /><path d="M4 4c1 2 2 3 4 3.500C10 6 12 6 14 6c-2 2-2 3-1 5l4 1c-1 3-4 3-4 5 2 3 7 3 10-1 3-5 0-9-2-12 0-2 1-4 2-4 1 4 5 4 7 9 3 10-3 22-15 22S-1 20 1 12C1 9 3 7 4 4z" fill="url(#fox)" />
  </svg>
);
const WordIcon = () => (
  <svg width="32" height="31" viewBox="0 0 32 31"><path d="M5 1h18v25H2C1 14 1 6 5 1z" fill="#dfe9f8" stroke="#3b5fae" strokeWidth="2" /><path d="M9 5l20 2-1 23-19-3z" fill="#fbfdff" stroke="#7d97c6" /><text x="10" y="17" fontSize="12" fontWeight="700" fill="#1c3f94" fontFamily="Liberation Serif">W</text><path d="M22 10.500h5M22 13.500h5M22 16.500h5M11 20l15 1M11 23l15 1M11 26l12 1" stroke="#2850a8" strokeWidth="1.500" /></svg>
);
const PptIcon = () => (
  <svg width="32" height="31" viewBox="0 0 32 31"><path d="M6 1h19l-1 24H2C0 12 1 5 6 1z" fill="#f9c7a5" stroke="#e0602c" strokeWidth="2" /><path d="M8 8l22 2-2 19-21-3z" fill="#e4581f" stroke="#fff" strokeWidth="2" /><path d="M10 14h6M10 18h5M10 22h6" stroke="#fff" strokeWidth="2" /><circle cx="21.500" cy="18.500" r="5" fill="#fff" /><path d="M22 18l5-4v4z" fill="#e4581f" /></svg>
);
const CamtasiaMark = () => <svg width="21" height="24" viewBox="0 0 21 24"><path d="M21 0l-4 6H7.500L5 8.500v7.500L7.500 18H17l4 6H6l-6-6V6l6-6z" fill="#fff" /><path d="M0 6l5 3v7l-5 2z" fill="#e6efe0" /></svg>;
const KeyboardIcon = () => <svg width="16" height="14" viewBox="0 0 16 14" fill="none" stroke="#c9d2dc"><path d="M8 5c-4-3 6-2 5-5" /><rect x=".5" y="5.500" width="15" height="8" rx="1" fill="#8d9aa9" /><path d="M2 8h12M2 10h12M4 12h8" strokeDasharray="1.500 1" /></svg>;
const StackIcon = () => <svg width="10" height="17" viewBox="0 0 10 17"><path d="M2.500.5h6v4h-6zM.5 2.500h5v4h-5z" fill="#27507f" stroke="#fff" /><path d="M1 13h6l-3 3z" fill="#fff" /></svg>;
const PlusBadge = () => <svg width="17" height="17" viewBox="0 0 17 17"><circle cx="8.500" cy="8.500" r="8" fill="#c9dc16" /><path d="M1 12a8 8 0 0014 1z" fill="#2d9a2a" /><path d="M1 6a8 8 0 0114-1L12 13H5z" fill="#e9e52a" /><path d="M8.500 4v8M4.500 8h8" stroke="#14531b" strokeWidth="2.300" /></svg>;
const SpeakerIcon = () => <svg width="14" height="14" viewBox="0 0 14 14"><path d="M0 4.500h3L7 0v14L3 9.500H0z" fill="#fff" /><path d="M9 4.500c1.500 1.500 1.500 3.500 0 5M11 3c2 2.500 2 5.500 0 8" stroke="#c9d8e8" fill="none" /></svg>;
const FlagIcon = () => <svg width="16" height="15" viewBox="0 0 16 15"><path d="M1 0v14" stroke="#fff" strokeWidth="2" /><path d="M3 1h4l2 1h4v7H9L7 8H3z" fill="#eef3f8" /><circle cx="11" cy="10" r="4.500" fill="#e02a22" /><path d="M9 8l4 4M13 8l-4 4" stroke="#fff" strokeWidth="1.400" /></svg>;
const NetIcon = () => <svg width="16" height="15" viewBox="0 0 16 15"><path d="M6 2.500h9v9H6z" fill="#2d4f77" stroke="#fff" /><path d="M1 0v4h4V0M3 4v10h4" stroke="#fff" fill="none" strokeWidth="1.400" /><path d="M10 5l5 9.500H5z" fill="#fbd02b" stroke="#86650b" strokeWidth=".6" /><path d="M10 8v3.500M10 12.300v1.200" stroke="#222" strokeWidth="1.300" /></svg>;
const SpellIcon = () => <svg width="17" height="14" viewBox="0 0 17 14"><path d="M0 8l5-2 4 4 6-3v3l-6 4-5-3z" fill="#fff" stroke="#5370a0" /><path d="M7 0l8 8M14 0L7 7" stroke="#e3481f" strokeWidth="2.400" /></svg>;
const MacroIcon = () => <svg width="16" height="14" viewBox="0 0 16 14"><path d="M1.500 2.500h13v11h-13z" fill="#fff" stroke="#4a6a9f" /><path d="M2 3h12v2.500H2z" fill="#5c84c4" /><path d="M2 8.500h12M2 11h12M6 6v8M10 6v8" stroke="#9fb3d1" /><circle cx="3" cy="3" r="3" fill="#d4532d" /></svg>;
const PageView = ({ faint, web }) => <svg width="11" height="11" viewBox="0 0 11 11"><path d="M.5.5h10v10H.5z" fill={faint ? "none" : "#fff"} stroke={faint ? "none" : "#444"} /><path d={faint ? "M0 1.500h11M0 4h11M0 6.500h11M0 9h11" : "M2 2.500h7M2 4.500h7M2 6.500h7M2 8.500h7"} stroke="#555" />{web && <circle cx="9" cy="8.500" r="3.300" fill="#3f9b5a" stroke="#2a5fa8" />}</svg>;
const OutlineView = () => <svg width="11" height="11" viewBox="0 0 11 11"><path d="M0 1.500h7M2 4h9M4 6.500h7M2 9h9" stroke="#666" /></svg>;
const BookView = () => <svg width="13" height="11" viewBox="0 0 13 11" fill="#fff" stroke="#444"><path d="M.5 1l5 1 1 1 1-1 5-1v8l-5 .5-1 1-1-1-5-.5z" /><path d="M6.500 3v7M2 4h2.500M2 6h2.500M8.500 4H11M8.500 6H11" /></svg>;
const ZoomTrack = () => (
  <svg width="141" height="18" viewBox="2 0 141 18">
    <path d="M20 9.500h104" stroke="#fff" /><path d="M20 8.500h104" stroke="#6b8cc0" />
    {[10, 127].map((x) => <g key={x}><circle cx={x} cy="9" r="7.500" fill="#e4ecf7" stroke="#6b84ab" /><path d={`M${x - 4} 9h8`} stroke="#3f5680" strokeWidth="2.200" /></g>)}
    <path d="M127 5v8" stroke="#3f5680" strokeWidth="2.200" /><path d="M68 3h8v7l-4 4-4-4z" fill="#eff4fb" stroke="#5c79a8" /><path d="M72 5v5" stroke="#7791bb" />
  </svg>
);
const PrevPage = () => <svg width="8" height="9" viewBox="0 0 8 9" fill="none" stroke="#111" strokeWidth="1.300"><path d="M1 4l3-3 3 3M1 8l3-3 3 3" /></svg>;
const NextPage = () => <svg width="8" height="9" viewBox="0 0 8 9" fill="none" stroke="#111" strokeWidth="1.300"><path d="M1 1l3 3 3-3M1 5l3 3 3-3" /></svg>;
const BrowseDot = () => <svg width="8" height="8" viewBox="0 0 8 8"><circle cx="4" cy="4" r="3" fill="#8ba5c9" stroke="#111" /></svg>;

/* ---------- data ---------- */
const TABS = ["开始", "插入", "页面布局", "引用", "邮件", "审阅", "视图", "开发工具"];
const SANS = `"Noto Sans CJK SC", sans-serif`;
const STYLES = [
  { n: "标题", f: HUMAN, s: 17.6, b: 600 },
  { n: "标题 1", mark: 1, f: HUMAN, s: 17.6, b: 600 },
  { n: "标题 2", mark: 1, f: `"Liberation Sans", sans-serif`, s: 17.600, b: 700 },
  { n: "标题 3", f: HUMAN, s: 13.1, b: 700, t: "AaBbCcD" },
  { n: "标题 4", f: HUMAN, s: 15.4, b: 700, t: "AaBbCc" },
  { n: "副标题", f: HUMAN, s: 17.6, b: 600 },
  { n: "要点", f: SANS, s: 12.9, t: "AaBbCcDd" },
  { n: "正文", mark: 1, f: SANS, s: 11.9, t: "AaBbCcDd", on: 1 },
  { n: "不明显强调", f: SERIF, s: 14, i: 1, c: "#8a8a8a", t: "AaBbCcDd" },
  { n: "强调", f: SERIF, s: 10.3, b: 700, t: "AaBbCcDdEe" },
  { n: "明显强调", f: SERIF, s: 13.5, b: 700, i: 1, c: "#5b9bd5", t: "AaBbCcDd" },
];

const RibbonGroup = ({ label, w, launcher, p, col, children }) => (
  <Group $w={w}>
    <GroupBody $p={p} $col={col}>{children}</GroupBody>
    <GroupLabel $launcher={launcher}>{label}{launcher && <Launcher><LauncherIcon /></Launcher>}</GroupLabel>
  </Group>
);

function RibbonBar() {
  return (
    <Ribbon>
      <RibbonGroup label="剪贴板" w={111} launcher>
        <PasteButton><PasteIcon /><ButtonCaption $m="5px 0 6px">粘贴</ButtonCaption><Drop /></PasteButton>
        <CommandList $ml={4}>
          <Command $off><CommandIcon><CutIcon /></CommandIcon>剪切</Command>
          <Command $off><CommandIcon><CopyIcon /></CommandIcon>复制</Command>
          <Command><CommandIcon><BrushIcon /></CommandIcon>格式刷</Command>
        </CommandList>
      </RibbonGroup>

      <RibbonGroup label="字体" w={316} launcher col p="11px 0 0 3px">
        <ToolRow $h={35}>
          <Combo $w={125}>宋体 (中文正文)<Drop /></Combo>
          <Combo $w={54}>五号<Drop /></Combo><ComboGap />
          <ButtonSet><Tool $w={22}><Glyph>A<sup>▴</sup></Glyph></Tool><Tool $w={21}><Glyph $s={12}>A<sup>▾</sup></Glyph></Tool></ButtonSet>
          <ButtonSet><Tool $w={21}><EraserIcon /></Tool></ButtonSet>
          <ButtonSet><Tool $w={21}><Pinyin><small>wén</small>文</Pinyin></Tool></ButtonSet>
          <ButtonSet><Tool $w={21}><Glyph $box>A</Glyph></Tool></ButtonSet>
        </ToolRow>
        <ToolRow $h={24}>
          <ButtonSet>
            <Tool $w={22}><Glyph $s={14}>B</Glyph></Tool><Tool $w={24}><Glyph $s={14} $i>I</Glyph></Tool>
            <Tool $w={36}><Glyph $s={14} $d="underline">U</Glyph><Drop /></Tool><Tool $w={23}><Glyph $s={12} $d="line-through">abc</Glyph></Tool>
            <Tool $w={24}><Glyph $s={14}>x<sub>2</sub></Glyph></Tool><Tool $w={24}><Glyph $s={14}>x<sup>2</sup></Glyph></Tool>
            <Tool $w={28}><Glyph $s={13}>Aa</Glyph><Drop /></Tool>
          </ButtonSet>
          <ButtonSet><Tool $w={32}><MarkerIcon /><Drop /></Tool><Tool $w={32}><Glyph $c="#3b5aa3" $bar="#f00">A</Glyph><Drop /></Tool></ButtonSet>
          <ButtonSet><Tool $w={21}><Glyph $fill>A</Glyph></Tool></ButtonSet>
          <ButtonSet><Tool $w={21}><Ringed>字</Ringed></Tool></ButtonSet>
        </ToolRow>
      </RibbonGroup>

      <RibbonGroup label="段落" w={244} launcher col p="12px 0 0 3px">
        <ToolRow $h={33}>
          <ButtonSet><Tool $w={33}><ListIcon kind="bullet" /><Drop /></Tool><Tool $w={34}><ListIcon kind="number" /><Drop /></Tool><Tool $w={29}><ListIcon kind="multi" /><Drop /></Tool></ButtonSet>
          <ButtonSet><Tool $w={22}><IndentIcon out /></Tool><Tool $w={20}><IndentIcon /></Tool></ButtonSet>
          <ButtonSet><Tool $w={29}><WidthIcon /><Drop /></Tool></ButtonSet>
          <ButtonSet><Tool $w={21}><SortIcon /></Tool></ButtonSet>
          <ButtonSet><Tool $w={21}><MarksIcon /></Tool></ButtonSet>
        </ToolRow>
        <ToolRow $h={24}>
          <ButtonSet><Tool $w={22}><AlignIcon kind="l" /></Tool><Tool $w={24}><AlignIcon kind="c" /></Tool><Tool $w={24}><AlignIcon kind="r" /></Tool><Tool $w={23} $on><AlignIcon kind="j" /></Tool><Tool $w={21}><SpreadIcon /></Tool></ButtonSet>
          <ButtonSet><Tool $w={29}><SpacingIcon /><Drop /></Tool></ButtonSet>
          <ButtonSet><Tool $w={32}><BucketIcon /><Drop /></Tool><Tool $w={32}><BorderIcon /><Drop /></Tool></ButtonSet>
        </ToolRow>
      </RibbonGroup>

      <RibbonGroup label="样式" w={874} launcher p="3px 0 0 4px">
        <Gallery>
          {STYLES.map((s) => (
            <StyleCell key={s.n} $on={s.on}>
              <StyleCard $on={s.on}>
                <Sample $f={s.f} $s={s.s} $b={s.b} $i={s.i} $c={s.c}>{s.t || "AaBbCc"}</Sample>
                <StyleName>{s.mark && <small>↵ </small>}{s.n}</StyleName>
              </StyleCard>
            </StyleCell>
          ))}
          <GalleryScroll>
            <ScrollCell $off><svg width="5" height="3"><path d="M0 3h5L2.500 0z" fill="#aaa" /></svg></ScrollCell>
            <ScrollCell><Drop /></ScrollCell>
            <ScrollCell><svg width="7" height="7"><path d="M0 .5h7" stroke="#4f7cb8" /><path d="M1 3h5L3.500 6z" fill="#4f7cb8" /></svg></ScrollCell>
          </GalleryScroll>
        </Gallery>
        <ChangeStyles><StylesIcon /><ButtonCaption $m="7px 0 7px">更改样式</ButtonCaption><Drop /></ChangeStyles>
      </RibbonGroup>

      <RibbonGroup label="编辑" w={68} p="0 0 0 6px">
        <CommandList>
          <Command><CommandIcon><FindIcon /></CommandIcon>查找<CommandDrop><Drop /></CommandDrop></Command>
          <Command><CommandIcon><ReplaceIcon /></CommandIcon>替换</Command>
          <Command><CommandIcon><PointerIcon /></CommandIcon>选择<CommandDrop><Drop /></CommandDrop></Command>
        </CommandList>
      </RibbonGroup>
    </Ribbon>
  );
}

function ClassicRecorder() {
  return (
    <Classic>
      <ClassicMenu>
        <MenuWord $w={71}>Capture</MenuWord><MenuWord $w={62}>Effects</MenuWord><MenuWord $w={53}>Tools</MenuWord><MenuWord $w={40}>Help</MenuWord>
        <MenuSpring /><ClassicClose $w={36}>-</ClassicClose><ClassicClose $w={16}>x</ClassicClose>
      </ClassicMenu>
      <ClassicBody>
        <ClassicPanel $w={281}>
          <ClassicHead>Select area</ClassicHead>
          <PanelRow $pt={13}>
            <Column $w={115}><ClassicTile $w={69}><FullArea /></ClassicTile><ClassicLabel>Full screen</ClassicLabel></Column>
            <Column $w={75}><ClassicTile $w={77}><CustomArea /><ClassicSplit><BigDrop /></ClassicSplit></ClassicTile><ClassicLabel $mt={4}>Custom</ClassicLabel></Column>
            <Column $w={66} $ml={7}><FieldsRow><ClassicFields><ClassicField>1603</ClassicField><ClassicField>900</ClassicField></ClassicFields><ChainIcon /></FieldsRow><ClassicLabel $mt={6} $x={4}>Dimensior</ClassicLabel></Column>
          </PanelRow>
          <Rail width="281" height="14" viewBox="0 0 281 14"><circle cx="58" cy="7" r="3.500" fill="#050505" stroke="#444" /><circle cx="151" cy="7" r="4" fill="#7da3ea" stroke="#38507e" /></Rail>
        </ClassicPanel>
        <ClassicPanel $w={317}>
          <ClassicHead>Recorded inputs</ClassicHead>
          <PanelRow $pt={13}>
            <Column $w={103}><ClassicTile $w={77}><IconNudge $x={7}><WebcamIcon /></IconNudge><ClassicSplit><BigDrop /></ClassicSplit></ClassicTile><ClassicLabel>Webcam off</ClassicLabel></Column>
            <Column $w={81}><ClassicTile $w={77}><IconNudge $x={11}><StudioMic /></IconNudge><ClassicSplit><BigDrop /></ClassicSplit></ClassicTile><ClassicLabel $mt={4}>Audio on</ClassicLabel></Column>
            <Column $w={95} $ml={16} $mt={15}><ClassicVolume /></Column>
          </PanelRow>
          <Rail width="317" height="14" viewBox="0 0 317 14"><circle cx="53" cy="7" r="3.500" fill="#050505" stroke="#444" /><path d="M142 7h105V0" stroke="#3a9a3a" strokeWidth="1.500" fill="none" /><circle cx="142" cy="7" r="4" fill="#3fae3f" stroke="#215a21" /></Rail>
        </ClassicPanel>
        <ClassicRec>rec</ClassicRec>
      </ClassicBody>
    </Classic>
  );
}

function RecorderWindow() {
  return (
    <Recorder>
      <RecMenu>
        <MenuWord $w={62}>Capture</MenuWord><MenuWord $w={54}>Effects</MenuWord><MenuWord $w={46}>Tools</MenuWord><MenuWord $w={40}>Help</MenuWord>
        <MenuSpring />
        <svg width="34" height="11" viewBox="0 0 34 11"><path d="M0 5.500h10M23.500.5l10 10M33.500.5l-10 10" stroke="#b3b9be" strokeWidth="1.200" fill="none" /></svg>
      </RecMenu>
      <RecBody>
        <RecPanel $w={245}>
          <RecHead>Select area</RecHead>
          <PanelRow $pt={15}>
            <Column $w={100}><RecTile $w={56}><MonitorIcon full /></RecTile><RecLabel>Full screen</RecLabel></Column>
            <Column $w={67} $mt={1}><RecTile $w={63}><RecTileMain><MonitorIcon /></RecTileMain><RecSplit><Chevron /></RecSplit></RecTile><RecLabel $pull={2}>Custom</RecLabel></Column>
            <Column $w={72}>
              <RecFields><FieldStack><RecField>1680</RecField><RecField>1048</RecField></FieldStack><LinkLock /></RecFields>
              <RecLabel>Dimensior</RecLabel>
            </Column>
          </PanelRow>
          <Rail width="245" height="14" viewBox="0 0 245 14"><path d="M132 7h71V0" stroke="#7aa2ea" fill="none" /><circle cx="51" cy="7" r="4" fill="#16191c" stroke="#30363e" /><circle cx="132" cy="7" r="4" fill="#7396d6" /></Rail>
        </RecPanel>
        <RecPanel $w={277}>
          <RecHead>Recorded inputs</RecHead>
          <PanelRow $pt={15}>
            <Column $w={71} $ml={10}><RecTile $w={63}><RecTileMain><CameraIcon /></RecTileMain><RecSplit><Chevron /></RecSplit></RecTile><RecLabel>Camera off</RecLabel></Column>
            <Column $w={89} $mt={1}><RecTile $w={63}><RecTileMain><MicIcon /></RecTileMain><RecSplit><Chevron /></RecSplit></RecTile><RecLabel>Audio on</RecLabel></Column>
            <Column $w={84} $ml={6} $mt={13}><LevelMeter /></Column>
          </PanelRow>
          <Rail width="277" height="14" viewBox="0 0 277 14"><path d="M124 7h92V0" stroke="#2f9a3c" fill="none" /><circle cx="46" cy="7" r="4" fill="#16191c" stroke="#30363e" /><circle cx="124" cy="7" r="4" fill="#2f8f3a" /></Rail>
        </RecPanel>
        <RecDisc>rec</RecDisc>
      </RecBody>
    </Recorder>
  );
}

function DocumentArea() {
  return (
    <Workspace>
      <Swoosh width="1680" height="200" viewBox="0 0 1680 200" fill="none">
        <path d="M0 0H1660V4C1200 3 800 0 450 6 C280 40 140 100 0 158z" fill="#8fb3dd" opacity=".55" />
        <path d="M0 0H620C500 0 400 14 278 40 C180 66 80 96 0 129z" fill="#c3d9f2" opacity=".6" />
        <path d="M0 157C80 104 180 65 278 41" stroke="#b3cdec" />
      </Swoosh>
      <Page $h={175} $cut $p="40px 0 0 0">
        <CropRow><Crop $v="t" $h="r" /><Crop $v="t" $h="l" /></CropRow>
      </Page>
      <PageSeam />
      <Page $h={640} $p="100px 0 0 0">
        <CropRow><Crop $v="b" $h="r" /><Crop $v="b" $h="l" /></CropRow>
        <ClassicRecorder />
        <NoteRow><ArrowUp /><Note>录制</Note></NoteRow>
        <Caption><span>8.3-3</span>录制按钮</Caption>
        <Paragraph>
          <Line><Run $w={20}>（</Run><Run $latin $w={11}>3</Run><Run $w={20}>）</Run><Run $w={260}>在使用第二种录制方式时，在</Run><Run $latin $w={64}>Select</Run><Run $latin $w={46}>area</Run><Run $w={63}>中选择</Run><Run $latin $w={41}>Full</Run><Run $latin $w={64}>screen</Run><Run>为全屏录制，</Run></Line>
          <Line><Run $w={270}>中可以自定义录制的窗口大小，</Run><Run>还可以根据录制视频的要求自行拖动或改变大小，在</Run></Line>
          <Line><Run $latin $w={96}>Recorded</Run><Run $latin $w={63}>inputs</Run><Run $w={357}>中可以设置摄像头和音频的打开或关闭，</Run><Run>然后点击开始录制按钮，如图</Run></Line>
          <Line><Run $latin $dark>8.3-4</Run></Line>
        </Paragraph>
      </Page>
      <ScrollBar>
        <ScrollTop>
          <svg width="10" height="2"><path d="M0 1h10" stroke="#222f45" strokeWidth="2" /></svg>
          <svg width="12" height="11" viewBox="0 0 12 11"><path d="M.5.5h5v3h6v7h-8v-3h-3z" fill="#f0f3f8" stroke="#3e4f6c" /></svg>
        </ScrollTop>
        <ScrollUp><svg width="9" height="5"><path d="M0 5h9L4.500 0z" fill="#3b5687" /></svg></ScrollUp>
        <ScrollThumb><svg width="8" height="8"><path d="M0 .5h8M0 2.500h8M0 4.500h8M0 6.500h8" stroke="#6d7f9c" /></svg></ScrollThumb>
        <ScrollNav><Drop c="#2c4470" w={8} /><PrevPage /><BrowseDot /><NextPage /></ScrollNav>
      </ScrollBar>
    </Workspace>
  );
}

export default function App() {
  return (
    <Screen>
      <Global />
      <TitleBar>
        <OfficeButton><OfficeLogo /></OfficeButton>
        <QuickAccess>
          <QuickSlot $w={16}><SaveIcon /></QuickSlot><QuickSlot $w={27}><UndoIcon /></QuickSlot><QuickSlot $w={4}><Drop c="#dfe9f6" /></QuickSlot>
          <QuickSlot $w={28}><RedoIcon /></QuickSlot><QuickSlot $w={18}><PreviewIcon /></QuickSlot>
        </QuickAccess>
        <QuickMore><svg width="6" height="6"><path d="M0 .5h6" stroke="#fff" /><path d="M0 2.500h6L3 5.500z" fill="#fff" /></svg></QuickMore>
        <Ghost />
        <TitleText>8.3 刘婕妤   - Microsoft Word</TitleText>
        <WindowControls>
          <WinBtn $w={27}><svg width="12" height="5"><rect x=".5" y=".5" width="11" height="4" fill="#fff" stroke="#445" /></svg></WinBtn>
          <WinBtn $w={28}><svg width="12" height="12" fill="none"><path d="M4 1h7v7H9V3H4z" fill="#fff" stroke="#445" strokeWidth=".6" /><rect x="1.500" y="4.500" width="6" height="6" stroke="#fff" strokeWidth="2" /></svg></WinBtn>
          <WinBtn $w={47}><svg width="11" height="10"><path d="M1 1l9 8M10 1L1 9" stroke="#fff" strokeWidth="2.600" /></svg></WinBtn>
        </WindowControls>
      </TitleBar>
      <TabStrip>
        {TABS.map((t, i) => <Tab key={t} $active={i === 0}>{t}</Tab>)}
        <HelpMark><Globe /></HelpMark>
      </TabStrip>
      <RibbonBar />
      <DocumentArea />
      <StatusBar>
        <StatusCell $w={75}>页面: 4/12</StatusCell>
        <StatusCell $w={80}>字数: 3,571</StatusCell>
        <StatusCell $w={142}><SpellIcon />中文(简体，中国)</StatusCell>
        <StatusCell $w={74}>插入<MacroIcon /></StatusCell>
        <ViewButtons>
          <ViewBtn $on><PageView /></ViewBtn><ViewBtn><BookView /></ViewBtn><ViewBtn><PageView web /></ViewBtn><ViewBtn><OutlineView /></ViewBtn><ViewBtn><PageView faint /></ViewBtn>
        </ViewButtons>
        <ZoomText>140%</ZoomText>
        <ZoomSlider><ZoomTrack /></ZoomSlider>
      </StatusBar>
      <TaskBar>
        <Streak width="1680" height="39" viewBox="0 0 1680 39"><path d="M1068 0h90l42 39H1095z" fill="#fff" opacity=".06" /><path d="M1208 0h14l38 39h-12C1241 22 1229 8 1208 0z" fill="#b9d8f5" opacity=".85" /></Streak>
        <Orb><WindowsLogo /></Orb>
        <PinnedRow $ml={89} $gap={32}><IeIcon /><GreenE /><AppTile $bg="#fff"><CloudDisk /></AppTile></PinnedRow>
        <PinnedRow $ml={16} $gap={4}>
          <TaskButton $w={59}><Firefox /></TaskButton>
          <TaskButton $w={51} $ml={-1}><WordIcon /></TaskButton>
          <Stacked />
          <TaskButton $w={58}><PptIcon /></TaskButton>
          <TaskButton $w={58}><AppTile $r={3} $bg="linear-gradient(#62b200,#379400)"><CamtasiaMark /></AppTile></TaskButton>
          <TaskButton $w={58} $on><AppTile $r={3} $bg="linear-gradient(#fb7255,#ff3b43)"><CamtasiaMark /></AppTile></TaskButton>
        </PinnedRow>
        <Tray>
          <TraySlot $w={22}><KeyboardIcon /></TraySlot><TraySlot $w={28}><Globe s={16} /></TraySlot><TraySlot $w={16}><StackIcon /></TraySlot>
          <TraySlot $w={26}><PlusBadge /></TraySlot><TraySlot $w={22}><SpeakerIcon /></TraySlot><TraySlot $w={24}><FlagIcon /></TraySlot><TraySlot $w={23}><NetIcon /></TraySlot>
          <Clock><span>13:43</span><span>2019/4/22</span></Clock>
          <Peek />
        </Tray>
      </TaskBar>
      <RecorderWindow />
      <Frame>
        {[[0, 0], [835, 0], [1670, 0], [0, 519], [1670, 519], [0, 1038], [835, 1038], [1670, 1038]].map(([x, y]) => <Handle key={`${x}-${y}`} $x={x} $y={y} />)}
        <MoveCursor width="30" height="30" viewBox="0 0 30 30" fill="none">
          {[["#555", 3], ["#f4f4f4", 1.4]].map(([c, w]) => <g key={c} stroke={c} strokeWidth={w}><circle cx="15" cy="15" r="7.500" /><path d="M15 2v26M2 15h26M12.500 4L15 1l2.500 3M12.500 26l2.500 3 2.500-3M4 12.500L1 15l3 2.500M26 12.500l3 2.500-3 2.500" /></g>)}
        </MoveCursor>
      </Frame>
    </Screen>
  );
}
